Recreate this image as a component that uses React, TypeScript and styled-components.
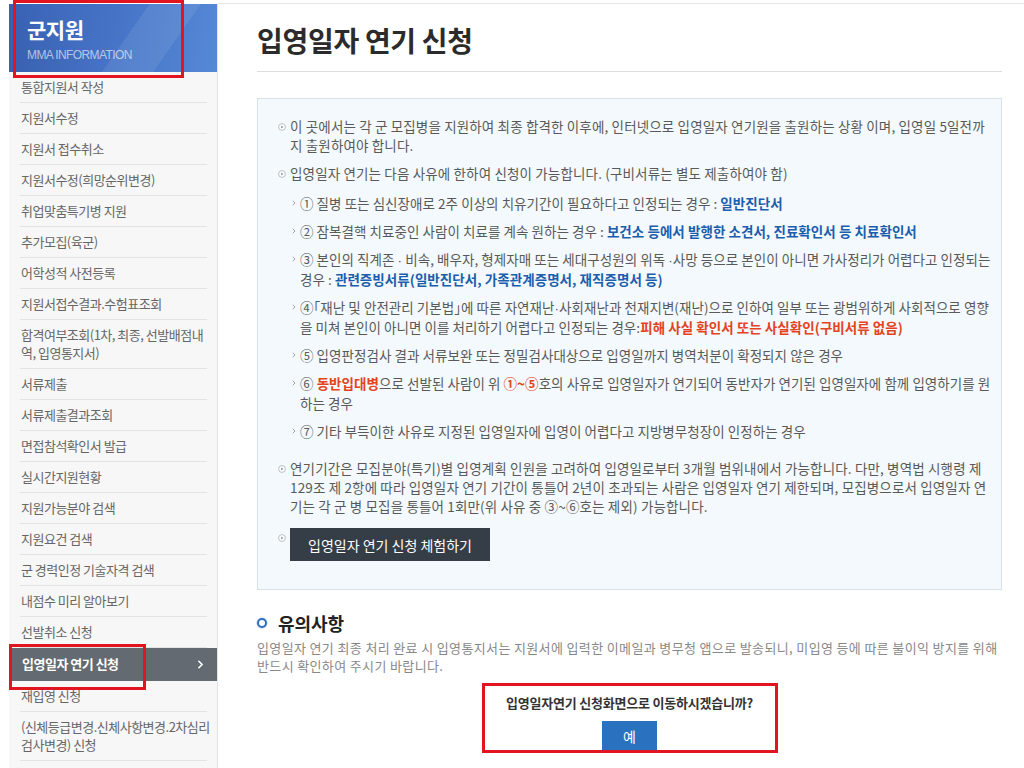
import styled, { createGlobalStyle } from "styled-components";
import { ChevronRight } from "lucide-react";

const GlobalStyle = createGlobalStyle`
  body {
    margin: 0;
    background: #fff;
    font-family: "Noto Sans CJK KR", "Noto Sans", sans-serif;
  }
  * { box-sizing: border-box; }
`;

const Page = styled.div`
  display: flex;
  align-items: flex-start;
  padding: 3px 0 0 9px;
  min-height: 768px;
`;

const Sidebar = styled.aside`
  flex: none;
  width: 209px;
  margin-top: 1px;
  min-height: 780px;
  background: #f7f7f7;
  border-right: 1px solid #e2e2e2;
`;

const SideHeader = styled.div`
  position: relative;
  height: 68px;
  padding: 12px 0 0 18px;
  background:
    linear-gradient(125deg, rgba(255, 255, 255, 0) 55%, rgba(255, 255, 255, 0.08) 55%, rgba(255, 255, 255, 0.08) 75%, rgba(255, 255, 255, 0) 75%),
    linear-gradient(65deg, rgba(0, 0, 0, 0.06) 0%, rgba(0, 0, 0, 0) 40%),
    linear-gradient(100deg, #3b65ba 0%, #4673c6 50%, #5589d6 100%);

  &::after {
    content: "";
    position: absolute;
    top: -4px;
    left: 4px;
    width: 165px;
    height: 72px;
    border: 3px solid #e2141f;
  }
`;

const SideTitle = styled.div`
  color: #fff;
  font-size: 21px;
  font-weight: 700;
  line-height: 26px;
  letter-spacing: -0.5px;
`;

const SideSub = styled.div`
  margin-top: 6px;
  color: rgba(255, 255, 255, 0.62);
  font-family: "Liberation Sans", Arial, sans-serif;
  font-size: 12px;
  line-height: 14px;
  letter-spacing: -0.6px;
`;

const Menu = styled.ul`
  list-style: none;
  margin: 0;
  padding: 0 10px 0 11px;
`;

const MenuLine = styled.span`
  display: block;
  white-space: nowrap;
`;

const MenuItem = styled.li<{ active?: boolean }>`
  position: relative;
  display: flex;
  align-items: center;
  justify-content: space-between;
  font-size: 13px;
  line-height: 18px;
  letter-spacing: -0.5px;
  ${({ active }) =>
    active
      ? `
    margin: 0 -10px 0 -11px;
    padding: 7px 10px 8px 13px;
    background: #636a71;
    color: #fff;
    font-weight: 700;
    &::after {
      content: "";
      position: absolute;
      top: -4px;
      left: 0;
      width: 131px;
      height: 40px;
      border: 3px solid #e2141f;
    }
  `
      : `
    padding: 6px 0 6px 1px;
    color: #666;
    border-bottom: 1px solid #e3e3e3;
  `}
`;

const Main = styled.main`
  flex: 1;
  min-width: 0;
  border-top: 1px solid #e6e6e6;
  padding: 0 22px 40px 39px;
`;

const TitleBar = styled.div`
  display: flex;
  align-items: center;
  height: 68px;
  padding-top: 4px;
  border-bottom: 1px solid #dedede;
`;

const Title = styled.h1`
  margin: 0;
  color: #2b2b2b;
  font-size: 28px;
  font-weight: 700;
  line-height: 34px;
  letter-spacing: -0.3px;
`;

const InfoBox = styled.div`
  margin-top: 26px;
  padding: 18px 4px 28px 20px;
  background: #f3f9fc;
  border: 1px solid #d8e2e8;
`;

const List = styled.ul`
  list-style: none;
  margin: 0;
  padding: 0;
`;

const Item = styled.li<{ tight?: boolean }>`
  display: flex;
  align-items: flex-start;
  gap: 4px;
  margin-top: ${({ tight }) => (tight ? "12px" : "9px")};
  color: #595959;
  font-size: 13.5px;
  line-height: 19px;
  letter-spacing: 0.15px;
  font-feature-settings: "halt" 1;

  &:first-child {
    margin-top: 0;
  }
`;

const ItemBody = styled.div`
  flex: 1;
  min-width: 0;
  padding-right: 10px;
`;

const SubList = styled.ul`
  list-style: none;
  margin: 10px -10px 9px 0;
  padding: 0;
  line-height: 20px;
  letter-spacing: 0.05px;
`;

const SubItem = styled.li`
  display: flex;
  align-items: flex-start;
  gap: 4px;
  margin-top: 8px;
  padding-left: 2px;

  &:first-child {
    margin-top: 0;
  }
`;

const SubBody = styled.div`
  flex: 1;
  min-width: 0;
`;

const Dot = styled.span`
  font-family: "Liberation Sans", Arial, sans-serif;
  line-height: 1;
`;

const BulletSvg = styled.svg`
  flex: none;
  margin-top: 5.5px;
`;

const ArrowSvg = styled.svg`
  flex: none;
  margin-top: 7px;
`;

const Blue = styled.b`
  color: #1b5eae;
`;

const Red = styled.b`
  color: #e4431d;
`;

const DarkButton = styled.button`
  width: 200px;
  height: 33px;
  border: 0;
  background: #353e47;
  color: #fff;
  font-family: inherit;
  font-size: 14px;
  letter-spacing: 0;
  cursor: pointer;
`;

const Section = styled.section`
  margin-top: 20px;
`;

const SectionHead = styled.h2`
  display: flex;
  align-items: center;
  gap: 11px;
  margin: 0;
  color: #222;
  font-size: 18px;
  font-weight: 700;
  line-height: 26px;
  letter-spacing: -0.1px;
`;

const Ring = styled.span`
  width: 10px;
  height: 10px;
  border-radius: 50%;
  border: 2.5px solid #2e6fc2;
  box-shadow: 0 0 0 0.5px rgba(46, 111, 194, 0.4);
`;

const Note = styled.p`
  margin: 3px 0 0;
  color: #888;
  font-size: 13px;
  line-height: 18px;
  letter-spacing: 0.36px;
`;

const Confirm = styled.div`
  width: 296px;
  margin: 8px auto 0;
  padding-top: 8px;
  border: 3px solid #e2141f;
  text-align: center;
`;

const ConfirmText = styled.div`
  color: #333;
  font-size: 13px;
  font-weight: 700;
  line-height: 18px;
  letter-spacing: -0.2px;
`;

const YesButton = styled.button`
  display: block;
  width: 55px;
  height: 29px;
  margin: 9px auto 0;
  border: 0;
  background: #2a72c0;
  color: #fff;
  font-family: inherit;
  font-size: 14px;
  cursor: pointer;
`;

const Bullet = () => (
  <BulletSvg width="8" height="8" viewBox="0 0 8 8">
    <circle cx="4" cy="4" r="3.4" fill="#fff" stroke="#b3b8bd" strokeWidth="0.9" />
    <path d="M3.2 2.5 L5.4 4 L3.2 5.5 Z" fill="#8b9197" />
  </BulletSvg>
);

const Arrow = () => (
  <ArrowSvg width="4" height="6" viewBox="0 0 4 6">
    <path d="M0.8 0.8 L3 3 L0.8 5.2" fill="none" stroke="#a2a2a2" strokeWidth="1" />
  </ArrowSvg>
);

const menu: { lines: string[]; active?: boolean }[] = [
  { lines: ["통합지원서 작성"] },
  { lines: ["지원서수정"] },
  { lines: ["지원서 접수취소"] },
  { lines: ["지원서수정(희망순위변경)"] },
  { lines: ["취업맞춤특기병 지원"] },
  { lines: ["추가모집(육군)"] },
  { lines: ["어학성적 사전등록"] },
  { lines: ["지원서접수결과.수험표조회"] },
  { lines: ["합격여부조회(1차, 최종, 선발배점내", "역, 입영통지서)"] },
  { lines: ["서류제출"] },
  { lines: ["서류제출결과조회"] },
  { lines: ["면접참석확인서 발급"] },
  { lines: ["실시간지원현황"] },
  { lines: ["지원가능분야 검색"] },
  { lines: ["지원요건 검색"] },
  { lines: ["군 경력인정 기술자격 검색"] },
  { lines: ["내점수 미리 알아보기"] },
  { lines: ["선발취소 신청"] },
  { lines: ["입영일자 연기 신청"], active: true },
  { lines: ["재입영 신청"] },
  { lines: ["(신체등급변경.신체사항변경.2차심리", "검사변경) 신청"] },
];

const App = () => {
  return (
    <>
      <GlobalStyle />
      <Page>
        <Sidebar>
          <SideHeader>
            <SideTitle>군지원</SideTitle>
            <SideSub>MMA INFORMATION</SideSub>
          </SideHeader>
          <Menu>
            {menu.map((m, i) => (
              <MenuItem key={i} active={m.active}>
                <span>
                  {m.lines.map((l, j) => (
                    <MenuLine key={j}>{l}</MenuLine>
                  ))}
                </span>
                {m.active && <ChevronRight size={13} strokeWidth={3} />}
              </MenuItem>
            ))}
          </Menu>
        </Sidebar>

        <Main>
          <TitleBar>
            <Title>입영일자 연기 신청</Title>
          </TitleBar>

          <InfoBox>
            <List>
              <Item>
                <Bullet />
                <ItemBody>
                  이 곳에서는 각 군 모집병을 지원하여 최종 합격한 이후에, 인터넷으로 입영일자 연기원을 출원하는 상황 이며, 입영일 5일전까지 출원하여야 합니다.
                </ItemBody>
              </Item>
              <Item>
                <Bullet />
                <ItemBody>
                  입영일자 연기는 다음 사유에 한하여 신청이 가능합니다. (구비서류는 별도 제출하여야 함)
                  <SubList>
                    <SubItem>
                      <Arrow />
                      <SubBody>
                        ① 질병 또는 심신장애로 2주 이상의 치유기간이 필요하다고 인정되는 경우 : <Blue>일반진단서</Blue>
                      </SubBody>
                    </SubItem>
                    <SubItem>
                      <Arrow />
                      <SubBody>
                        ② 잠복결핵 치료중인 사람이 치료를 계속 원하는 경우 : <Blue>보건소 등에서 발행한 소견서, 진료확인서 등 치료확인서</Blue>
                      </SubBody>
                    </SubItem>
                    <SubItem>
                      <Arrow />
                      <SubBody>
                        ③ 본인의 직계존 <Dot>·</Dot> 비속, 배우자, 형제자매 또는 세대구성원의 위독 <Dot>·</Dot>사망 등으로 본인이 아니면 가사정리가 어렵다고 인정되는 경우 : <Blue>관련증빙서류(일반진단서, 가족관계증명서, 재직증명서 등)</Blue>
                      </SubBody>
                    </SubItem>
                    <SubItem>
                      <Arrow />
                      <SubBody>
                        ④「재난 및 안전관리 기본법」에 따른 자연재난<Dot>·</Dot>사회재난과 천재지변(재난)으로 인하여 일부 또는 광범위하게 사회적으로 영향을 미쳐 본인이 아니면 이를 처리하기 어렵다고 인정되는 경우:<Red>피해 사실 확인서 또는 사실확인(구비서류 없음)</Red>
                      </SubBody>
                    </SubItem>
                    <SubItem>
                      <Arrow />
                      <SubBody>⑤ 입영판정검사 결과 서류보완 또는 정밀검사대상으로 입영일까지 병역처분이 확정되지 않은 경우</SubBody>
                    </SubItem>
                    <SubItem>
                      <Arrow />
                      <SubBody>
                        ⑥ <Red>동반입대병</Red>으로 선발된 사람이 위 <Red>①~⑤</Red>호의 사유로 입영일자가 연기되어 동반자가 연기된 입영일자에 함께 입영하기를 원
                        <br />
                        하는 경우
                      </SubBody>
                    </SubItem>
                    <SubItem>
                      <Arrow />
                      <SubBody>⑦ 기타 부득이한 사유로 지정된 입영일자에 입영이 어렵다고 지방병무청장이 인정하는 경우</SubBody>
                    </SubItem>
                  </SubList>
                </ItemBody>
              </Item>
              <Item>
                <Bullet />
                <ItemBody>
                  연기기간은 모집분야(특기)별 입영계획 인원을 고려하여 입영일로부터 3개월 범위내에서 가능합니다. 다만, 병역법 시행령 제 129조 제 2항에 따라 입영일자 연기 기간이 통틀어 2년이 초과되는 사람은 입영일자 연기 제한되며, 모집병으로서 입영일자 연기는 각 군 병 모집을 통틀어 1회만(위 사유 중 ③~⑥호는 제외) 가능합니다.
                </ItemBody>
              </Item>
              <Item tight>
                <Bullet />
                <DarkButton>입영일자 연기 신청 체험하기</DarkButton>
              </Item>
            </List>
          </InfoBox>

          <Section>
            <SectionHead>
              <Ring />
              유의사항
            </SectionHead>
            <Note>
              입영일자 연기 최종 처리 완료 시 입영통지서는 지원서에 입력한 이메일과 병무청 앱으로 발송되니, 미입영 등에 따른 불이익 방지를 위해 반드시 확인하여 주시기 바랍니다.
            </Note>
            <Confirm>
              <ConfirmText>입영일자연기 신청화면으로 이동하시겠습니까?</ConfirmText>
              <YesButton>예</YesButton>
            </Confirm>
          </Section>
        </Main>
      </Page>
    </>
  );
};

export default App;
